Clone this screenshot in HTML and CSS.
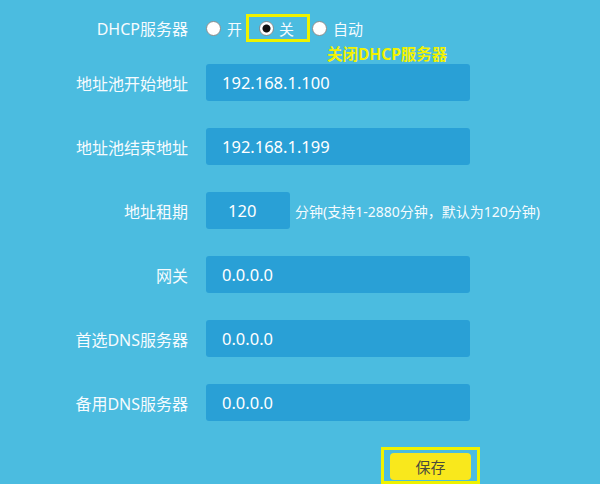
FILE: index.html
```html
<!DOCTYPE html>
<html lang="zh-CN">
<head>
    <meta charset="UTF-8">
    <title>DHCP服务器</title>
    <link rel="stylesheet" href="styles.css">
</head>
<body>

<form class="dhcp-form" onsubmit="return false;">
    <div class="row row-switch">
        <label class="label">DHCP服务器</label>
        <div class="radios">
            <label class="radio"><input type="radio" name="dhcp" value="on">开</label>
            <span class="mark">
                <label class="radio"><input type="radio" name="dhcp" value="off" checked>关</label>
            </span>
            <label class="radio"><input type="radio" name="dhcp" value="auto">自动</label>
            <span class="note">关闭DHCP服务器</span>
        </div>
    </div>

    <div class="row">
        <label class="label" for="poolStart">地址池开始地址</label>
        <input class="field" type="text" id="poolStart" value="192.168.1.100">
    </div>

    <div class="row">
        <label class="label" for="poolEnd">地址池结束地址</label>
        <input class="field" type="text" id="poolEnd" value="192.168.1.199">
    </div>

    <div class="row">
        <label class="label" for="lease">地址租期</label>
        <input class="field field-short" type="text" id="lease" value="120">
        <span class="hint">分钟(支持1-2880分钟，默认为120分钟)</span>
    </div>

    <div class="row">
        <label class="label" for="gateway">网关</label>
        <input class="field" type="text" id="gateway" value="0.0.0.0">
    </div>

    <div class="row">
        <label class="label" for="dns1">首选DNS服务器</label>
        <input class="field" type="text" id="dns1" value="0.0.0.0">
    </div>

    <div class="row">
        <label class="label" for="dns2">备用DNS服务器</label>
        <input class="field" type="text" id="dns2" value="0.0.0.0">
    </div>

    <div class="actions">
        <span class="mark mark-save">
            <button type="submit" class="save">保存</button>
        </span>
    </div>
</form>

</body>
</html>
```

FILE: styles.css
```css
body {
    margin: 0;
    padding: 0;
    background-color: #4bbce0;
    color: #ffffff;
    font-family: "Noto Sans", "Noto Sans CJK SC", sans-serif;
    overflow: hidden;
}

.dhcp-form {
    padding-top: 14px;
}

.row {
    display: flex;
    align-items: center;
    height: 37px;
    margin-bottom: 27px;
}

.row-switch {
    height: 28px;
    margin-bottom: 22px;
}

.label {
    width: 188px;
    margin-right: 18px;
    text-align: right;
    font-size: 16px;
    color: #f6fbfe;
    flex-shrink: 0;
}

/* radio group */
.radios {
    position: relative;
    display: flex;
    align-items: center;
    height: 28px;
}

.radio {
    display: flex;
    align-items: center;
    font-size: 15px;
    color: #f6fbfe;
}

.radio input {
    appearance: none;
    -webkit-appearance: none;
    width: 15px;
    height: 15px;
    margin: 0 6px 0 0;
    border: 1px solid #8d8d8d;
    border-radius: 50%;
    background-color: #ffffff;
    box-sizing: border-box;
}

.radio input:checked {
    background: radial-gradient(circle, #111111 0, #111111 3.5px, #ffffff 4.5px);
}

.mark {
    display: inline-flex;
    align-items: center;
    border: 3px solid #eef200;
    box-sizing: border-box;
}

.radios .mark {
    height: 28px;
    margin: 0 2px 0 4px;
    padding: 0 13px 0 10px;
}

.radios .mark .radio input {
    margin-right: 5px;
}

.note {
    position: absolute;
    left: 121px;
    top: 28px;
    white-space: nowrap;
    font-size: 15.5px;
    font-weight: bold;
    color: #f2f200;
}

/* text fields */
.field {
    width: 264px;
    height: 37px;
    padding: 0 16px;
    border: none;
    border-radius: 3px;
    background-color: #29a0d6;
    color: #ffffff;
    font-family: "Noto Sans", "Noto Sans CJK SC", sans-serif;
    font-size: 16.5px;
    box-sizing: border-box;
    outline: none;
}

.field-short {
    width: 84px;
    padding-left: 22px;
}

.hint {
    margin-left: 5px;
    font-size: 14px;
    color: #f6fbfe;
    white-space: nowrap;
}

/* save button */
.actions {
    padding-left: 381px;
    margin-top: -1px;
}

.mark-save {
    width: 99px;
    height: 37px;
    padding: 3px 4px 1px 6px;
}

.save {
    width: 81px;
    height: 27px;
    border: none;
    border-radius: 4px;
    background-color: #f9e81c;
    color: #4b4b3c;
    font-family: "Noto Sans CJK SC", sans-serif;
    font-size: 15px;
    cursor: pointer;
}
```
